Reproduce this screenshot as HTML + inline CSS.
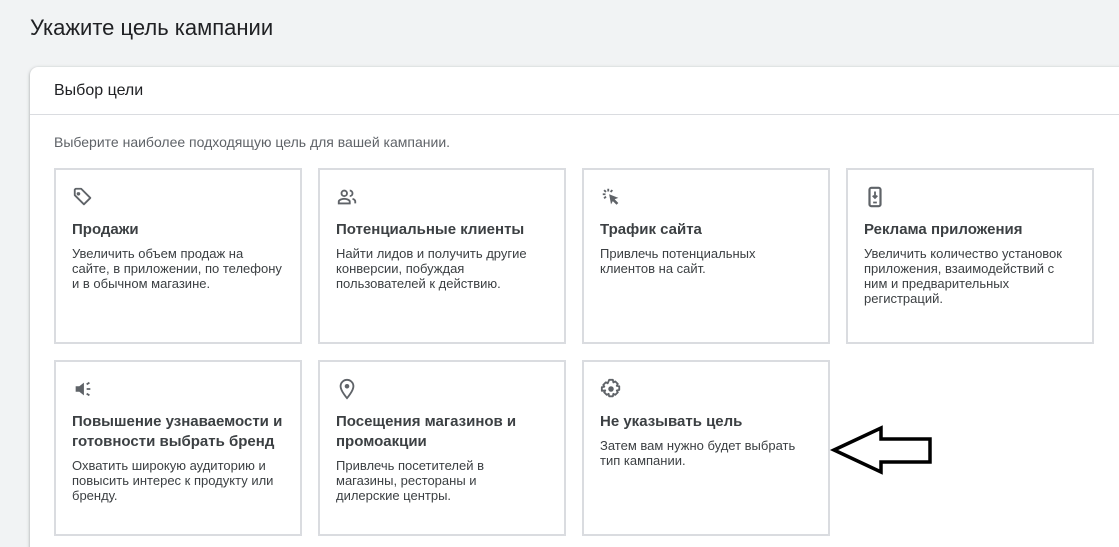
<!DOCTYPE html>
<html><head><meta charset="utf-8"><style>
*{margin:0;padding:0;box-sizing:border-box}
html,body{width:1119px;height:547px;overflow:hidden}
body{background:#f1f3f4;font-family:"Liberation Sans",Arial,sans-serif;color:#202124;position:relative}
h1{position:absolute;left:30px;top:15px;font-size:22px;font-weight:400;color:#202124}
.panel{position:absolute;left:30px;top:67px;width:1100px;height:490px;background:#fff;border-radius:8px;box-shadow:0 1px 2px rgba(60,64,67,.3),0 1px 3px 1px rgba(60,64,67,.15)}
.ph{height:48px;border-bottom:1px solid #dadce0;padding:15px 24px;font-size:16px;color:#202124}
.sub{position:absolute;left:24px;top:67px;font-size:14px;color:#5f6368}
.card{position:absolute;width:248px;height:176px;border:2px solid #dadce0;background:#fff;padding:16px 6px 16px 16px}
.card svg{display:block;width:22px;height:22px}
.t{margin-top:12px;font-size:15px;font-weight:600;line-height:20px;color:#3c4043}
.d{margin-top:6px;font-size:13px;line-height:15px;color:#3c4043;white-space:nowrap}
</style></head><body>
<h1>Укажите цель кампании</h1>
<div class="panel">
<div class="ph">Выбор цели</div>
<div class="sub">Выберите наиболее подходящую цель для вашей кампании.</div>
</div>
<div class="card" style="left:54px;top:168px"><svg viewBox="0 0 24 24"><path d="M3 4v6l10 10 7-7L10 3H4z M7 7.5a1 1 0 1 0 .1 0" fill="none" stroke="#5f6368" stroke-width="2" stroke-linejoin="round"/></svg><div class="t">Продажи</div><div class="d">Увеличить объем продаж на<br>сайте, в приложении, по телефону<br>и в обычном магазине.</div></div>
<div class="card" style="left:318px;top:168px"><svg viewBox="0 0 24 24"><circle cx="9" cy="8" r="3" fill="none" stroke="#5f6368" stroke-width="2"/><path d="M3 19v-2c0-2 4-3 6-3s6 1 6 3v2z M15 5a3 3 0 0 1 0 6 M18 14c2 .5 3 1.5 3 3v2" fill="none" stroke="#5f6368" stroke-width="2"/></svg><div class="t">Потенциальные клиенты</div><div class="d">Найти лидов и получить другие<br>конверсии, побуждая<br>пользователей к действию.</div></div>
<div class="card" style="left:582px;top:168px"><svg viewBox="0 0 24 24"><path d="M10 9l10 4-4 1.5 4 4-2 2-4-4L12 20z" fill="#5f6368"/><path d="M9 3v3M3 9h3M4.5 4.5l2 2M4.5 13.5l2-2M13.5 4.5l-2 2" stroke="#5f6368" stroke-width="2"/></svg><div class="t">Трафик сайта</div><div class="d">Привлечь потенциальных<br>клиентов на сайт.</div></div>
<div class="card" style="left:846px;top:168px"><svg viewBox="0 0 24 24"><rect x="6" y="2" width="12" height="20" rx="2" fill="none" stroke="#5f6368" stroke-width="2.4"/><path d="M12 6v7M9.5 10.5L12 13l2.5-2.5M10 18h4" stroke="#5f6368" stroke-width="2" fill="none"/></svg><div class="t">Реклама приложения</div><div class="d">Увеличить количество установок<br>приложения, взаимодействий с<br>ним и предварительных<br>регистраций.</div></div>
<div class="card" style="left:54px;top:360px"><svg viewBox="0 0 24 24"><path d="M4 9h4l5-4v14l-5-4H4z" fill="#5f6368"/><path d="M16 12h4M16 7l3-2M16 17l3 2" stroke="#5f6368" stroke-width="2"/></svg><div class="t">Повышение узнаваемости и<br>готовности выбрать бренд</div><div class="d">Охватить широкую аудиторию и<br>повысить интерес к продукту или<br>бренду.</div></div>
<div class="card" style="left:318px;top:360px"><svg viewBox="0 0 24 24"><path d="M12 2a7 7 0 0 0-7 7c0 5 7 13 7 13s7-8 7-13a7 7 0 0 0-7-7z" fill="none" stroke="#5f6368" stroke-width="2"/><circle cx="12" cy="9" r="2.5" fill="#5f6368"/></svg><div class="t">Посещения магазинов и<br>промоакции</div><div class="d">Привлечь посетителей в<br>магазины, рестораны и<br>дилерские центры.</div></div>
<div class="card" style="left:582px;top:360px"><svg viewBox="0 0 24 24"><path d="M10 2h4l.6 2.8 2-1.1 2.8 2.8-1.1 2 2.7.5v4l-2.7.6 1.1 2-2.8 2.8-2-1.1-.6 2.7h-4l-.6-2.7-2 1.1-2.8-2.8 1.1-2L2 14V10l2.7-.5-1.1-2 2.8-2.8 2 1.1z" fill="none" stroke="#5f6368" stroke-width="2" stroke-linejoin="round"/><circle cx="12" cy="12" r="3" fill="#5f6368"/></svg><div class="t">Не указывать цель</div><div class="d">Затем вам нужно будет выбрать<br>тип кампании.</div></div>
<svg style="position:absolute;left:0;top:0" width="1119" height="547"><path d="M834 450L881 428V439H930V462H881V472Z" fill="none" stroke="#000" stroke-width="3.5" stroke-linejoin="miter"/></svg>
</body></html>
